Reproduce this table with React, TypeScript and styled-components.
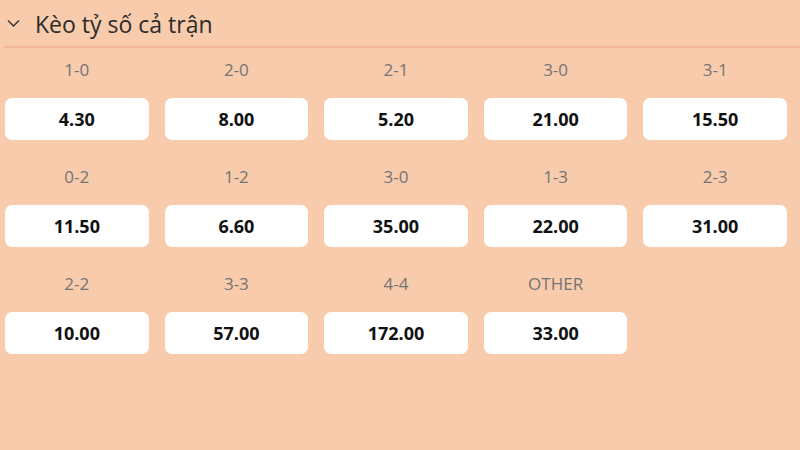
import styled, { createGlobalStyle } from "styled-components";

const GlobalStyle = createGlobalStyle`
  body {
    margin: 0;
    background-color: #f7cbab;
    font-family: "Open Sans", "Noto Sans", sans-serif;
  }
`;

const Wrapper = styled.div`
  width: 800px;
  height: 450px;
  background-color: #f7cbab;
  overflow: hidden;
`;
const Header = styled.div`
  display: flex;
  align-items: center;
  gap: 15px;
  height: 46px;
  margin-left: 4px;
  padding-left: 3px;
  border-bottom: 2px solid #f2b596;
`;
const Title = styled.div`
  font-size: 23px;
  line-height: 30px;
  color: #2b2b2b;
  padding-top: 2px;
`;
const Grid = styled.div`
  display: grid;
  grid-template-columns: repeat(5, 1fr);
  column-gap: 16px;
  row-gap: 15px;
  width: 782px;
  padding-left: 5px;
`;
const Cell = styled.div`
  display: flex;
  flex-direction: column;
  align-items: center;
`;
const Score = styled.div`
  padding-top: 10px;
  margin-bottom: 16px;
  line-height: 24px;
  font-size: 17px;
  color: #747474;
`;
const Odds = styled.div`
  width: 100%;
  height: 42px;
  display: flex;
  align-items: center;
  justify-content: center;
  background-color: #ffffff;
  border-radius: 7px;
  font-size: 18px;
  font-weight: 700;
  color: #111111;
`;

const odds = [
  ["1-0", "4.30"],
  ["2-0", "8.00"],
  ["2-1", "5.20"],
  ["3-0", "21.00"],
  ["3-1", "15.50"],
  ["0-2", "11.50"],
  ["1-2", "6.60"],
  ["3-0", "35.00"],
  ["1-3", "22.00"],
  ["2-3", "31.00"],
  ["2-2", "10.00"],
  ["3-3", "57.00"],
  ["4-4", "172.00"],
  ["OTHER", "33.00"],
];

const App = () => {
  return (
    <Wrapper>
      <GlobalStyle />
      <Header>
        <svg width="13" height="9" viewBox="0 0 13 9" fill="none">
          <path d="M1 1.5 L6.5 7 L12 1.5" stroke="#333" strokeWidth="1.4" />
        </svg>
        <Title>Kèo tỷ số cả trận</Title>
      </Header>
      <Grid>
        {odds.map(([score, value], i) => (
          <Cell key={i}>
            <Score>{score}</Score>
            <Odds>{value}</Odds>
          </Cell>
        ))}
      </Grid>
    </Wrapper>
  );
};
export default App;
